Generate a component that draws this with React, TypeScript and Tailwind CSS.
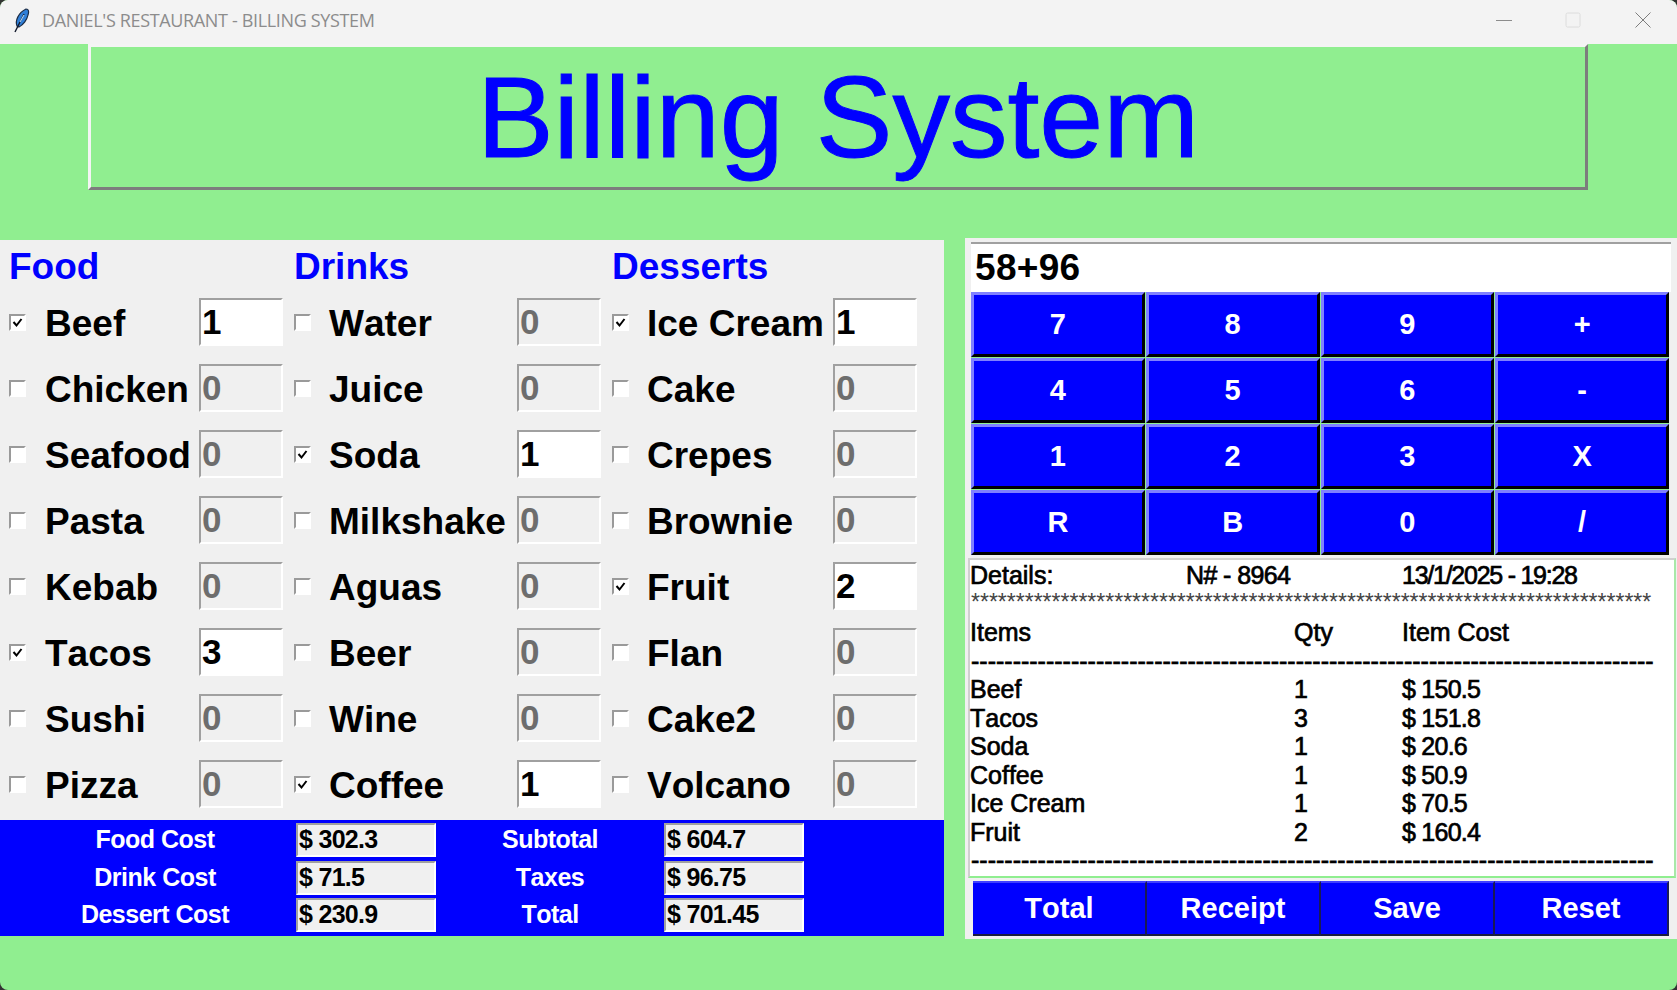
import React from 'react';

type Item = { name: string; qty: string };

const columns: { title: string; width: string; labelWidth: string; items: Item[] }[] = [
  {
    title: 'Food',
    width: 'w-[284px] pl-[9px]',
    labelWidth: 'w-[173px] pl-[19px]',
    items: [
      { name: 'Beef', qty: '1' },
      { name: 'Chicken', qty: '0' },
      { name: 'Seafood', qty: '0' },
      { name: 'Pasta', qty: '0' },
      { name: 'Kebab', qty: '0' },
      { name: 'Tacos', qty: '3' },
      { name: 'Sushi', qty: '0' },
      { name: 'Pizza', qty: '0' },
    ],
  },
  {
    title: 'Drinks',
    width: 'w-[318px] pl-[10px]',
    labelWidth: 'w-[206px] pl-[18px]',
    items: [
      { name: 'Water', qty: '0' },
      { name: 'Juice', qty: '0' },
      { name: 'Soda', qty: '1' },
      { name: 'Milkshake', qty: '0' },
      { name: 'Aguas', qty: '0' },
      { name: 'Beer', qty: '0' },
      { name: 'Wine', qty: '0' },
      { name: 'Coffee', qty: '1' },
    ],
  },
  {
    title: 'Desserts',
    width: 'w-[330px] pl-[10px]',
    labelWidth: 'w-[204px] pl-[18px]',
    items: [
      { name: 'Ice Cream', qty: '1' },
      { name: 'Cake', qty: '0' },
      { name: 'Crepes', qty: '0' },
      { name: 'Brownie', qty: '0' },
      { name: 'Fruit', qty: '2' },
      { name: 'Flan', qty: '0' },
      { name: 'Cake2', qty: '0' },
      { name: 'Volcano', qty: '0' },
    ],
  },
];

const costs = [
  ['Food Cost', '$ 302.3', 'Subtotal', '$ 604.7'],
  ['Drink Cost', '$ 71.5', 'Taxes', '$ 96.75'],
  ['Dessert Cost', '$ 230.9', 'Total', '$ 701.45'],
];

const keys = ['7', '8', '9', '+', '4', '5', '6', '-', '1', '2', '3', 'X', 'R', 'B', '0', '/'];

const receiptItems = [
  ['Beef', '1', '$ 150.5'],
  ['Tacos', '3', '$ 151.8'],
  ['Soda', '1', '$ 20.6'],
  ['Coffee', '1', '$ 50.9'],
  ['Ice Cream', '1', '$ 70.5'],
  ['Fruit', '2', '$ 160.4'],
];

function Feather() {
  return (
    <svg width="20" height="26" viewBox="0 0 20 26">
      <path d="M5 19C3 14 6 6 14 2c3 0 3 3 2 6-1 5-5 10-9 12z" fill="#2f7fd8" stroke="#1b2b44" strokeWidth="1.2" />
      <path d="M3 25L12 7" stroke="#10182a" strokeWidth="1.4" fill="none" />
      <path d="M8 15l4-7" stroke="#a9d2f5" strokeWidth="1.2" fill="none" />
    </svg>
  );
}

function CheckBox({ checked }: { checked: boolean }) {
  return (
    <div className="w-[17px] h-[17px] shrink-0 bg-white border-2 border-t-[#9a9a9a] border-l-[#9a9a9a] border-r-white border-b-white flex items-center justify-center">
      {checked && (
        <svg width="11" height="11" viewBox="0 0 11 11">
          <path d="M1.5 5l3 3.5L9.5 2" stroke="#000" strokeWidth="2" fill="none" />
        </svg>
      )}
    </div>
  );
}

function Row({ item, labelWidth }: { item: Item; labelWidth: string }) {
  const active = item.qty !== '0';
  return (
    <div className="flex items-center h-[48px]">
      <CheckBox checked={active} />
      <div className={`${labelWidth} pt-[2px] text-[37px] font-bold text-black whitespace-nowrap leading-none`}>{item.name}</div>
      <div
        className={`w-[84px] h-[48px] shrink-0 border-2 border-t-[#a0a0a0] border-l-[#a0a0a0] border-r-white border-b-white flex items-center pl-[1px] text-[35px] font-bold ${active ? 'bg-white text-black' : 'bg-[#f0f0f0] text-[#6d6d6d]'}`}
      >
        {item.qty}
      </div>
    </div>
  );
}

export default function App() {
  return (
    <div className="w-[1677px] h-[990px] bg-[#333333] overflow-hidden font-['Liberation_Sans',Arial,sans-serif] [font-kerning:none]">
      <div className="h-full bg-[#90ee90] rounded-[8px] overflow-hidden">
        {/* Title bar */}
        <div className="h-[44px] bg-[#f3f3f3] flex items-center pb-[4px]">
          <div className="pl-[12px] w-[42px]">
            <Feather />
          </div>
          <span className="text-[#8c8c8c] text-[18px] font-['Open_Sans',sans-serif] tracking-[-0.35px]">DANIEL'S RESTAURANT - BILLING SYSTEM</span>
          <div className="ml-auto flex items-center">
            <div className="w-[69px] flex justify-center pr-[2px]">
              <svg width="16" height="16" viewBox="0 0 16 16">
                <path d="M0 8.5h16" stroke="#8c8c8c" strokeWidth="1" />
              </svg>
            </div>
            <div className="w-[69px] flex justify-center pr-[2px]">
              <svg width="16" height="16" viewBox="0 0 16 16">
                <rect x="1" y="1" width="14" height="14" rx="1.5" fill="none" stroke="#dcdcdc" strokeWidth="1" />
              </svg>
            </div>
            <div className="w-[69px] flex justify-center">
              <svg width="16" height="16" viewBox="0 0 16 16">
                <path d="M0.5 0.5l15 15M15.5 0.5l-15 15" stroke="#7d7d7d" strokeWidth="1" />
              </svg>
            </div>
          </div>
        </div>

        {/* Heading */}
        <div className="pl-[88px]">
          <div className="w-[1500px] h-[146px] border-[3px] border-t-[#f4f4f4] border-l-[#f4f4f4] border-r-[#7d7d7d] border-b-[#7d7d7d] flex items-center justify-center">
            <span className="text-[115px] leading-none text-[#0000ff] [-webkit-text-stroke:1px_#0000ff]">Billing System</span>
          </div>
        </div>

        <div className="flex items-start pt-[48px]">
          {/* Left panel */}
          <div className="w-[944px] mt-[2px] bg-[#f0f0f0]">
            <div className="flex">
              {columns.map((col) => (
                <div key={col.title} className={col.width}>
                  <div className="h-[58px] pt-[7px] text-[37px] leading-[40px] font-bold text-[#0000ff]">{col.title}</div>
                  <div className="flex flex-col gap-[18px]">
                    {col.items.map((item) => (
                      <Row key={item.name} item={item} labelWidth={col.labelWidth} />
                    ))}
                  </div>
                </div>
              ))}
            </div>
            <div className="mt-[12px] h-[116px] bg-[#0000ff] pt-[3px] flex flex-col gap-[3.5px]">
              {costs.map((row) => (
                <div key={row[0]} className="flex items-center h-[34px] text-[25px] font-bold tracking-[-0.5px]">
                  <div className="w-[296px] pl-[14px] text-center text-white">{row[0]}</div>
                  <div className="w-[140px] h-[34px] bg-[#f0f0f0] border-2 border-t-[#a0a0a0] border-l-[#a0a0a0] border-r-white border-b-white flex items-center pl-[1px] text-black tracking-[-0.7px]">{row[1]}</div>
                  <div className="w-[228px] text-center text-white">{row[2]}</div>
                  <div className="w-[140px] h-[34px] bg-[#f0f0f0] border-2 border-t-[#a0a0a0] border-l-[#a0a0a0] border-r-white border-b-white flex items-center pl-[1px] text-black tracking-[-0.7px]">{row[3]}</div>
                </div>
              ))}
            </div>
          </div>

          {/* Right panel */}
          <div className="w-[712px] ml-[21px] h-[701px] bg-[#f0f0f0] pt-[4px]">
            <div className="ml-[6px] w-[700px] h-[50px] bg-white border-t-2 border-[#a0a0a0] pl-[4px] flex items-center text-[37px] font-bold text-black tracking-[0.3px]">58+96</div>
            <div className="ml-[6px] w-[698px] bg-[#90ee90] grid grid-cols-4 gap-[1px] h-[263px]">
              {keys.map((k) => (
                <div
                  key={k}
                  className="bg-[#0000ff] border-[3px] border-t-[#8080ff] border-l-[#8080ff] border-r-black border-b-black flex items-center justify-center text-white font-bold text-[29px]"
                >
                  {k}
                </div>
              ))}
            </div>
            <div className="ml-[3px] mt-[3px] w-[708px] h-[320px] bg-white border-2 border-t-[#d0d0d0] border-l-[#d0d0d0] border-r-[#a8e8a8] border-b-[#90ee90] pt-[1px] text-[25px] leading-[28.5px] text-black [-webkit-text-stroke:0.7px_black]">
              <div className="grid grid-cols-[324px_108px_1fr]">
                <span>Details:</span>
                <span className="-ml-[108px] tracking-[-0.6px]">N# - 8964</span>
                <span className="tracking-[-1.25px]">13/1/2025 - 19:28</span>
              </div>
              <div className="h-[28.5px] text-[23px] leading-[25px] text-[#444444] [-webkit-text-stroke:0px] whitespace-nowrap pl-[1px]">{'*'.repeat(76)}</div>
              <div className="grid grid-cols-[324px_108px_1fr]">
                <span>Items</span>
                <span>Qty</span>
                <span>Item Cost</span>
              </div>
              <div className="pl-[1px] whitespace-nowrap">{'-'.repeat(82)}</div>
              {receiptItems.map((r) => (
                <div key={r[0]} className="grid grid-cols-[324px_108px_1fr]">
                  <span>{r[0]}</span>
                  <span>{r[1]}</span>
                  <span className="tracking-[-0.75px]">{r[2]}</span>
                </div>
              ))}
              <div className="pl-[1px] whitespace-nowrap">{'-'.repeat(82)}</div>
            </div>
            <div className="ml-[8px] mt-[3px] w-[696px] grid grid-cols-4 h-[55px]">
              {['Total', 'Receipt', 'Save', 'Reset'].map((b) => (
                <div
                  key={b}
                  className="bg-[#0000ff] border-t-2 border-r-2 border-b-2 border-t-[#4040ff] border-r-[#1a1a55] border-b-[#1a1a40] flex items-center justify-center pt-[1px] text-white font-bold text-[29px]"
                >
                  {b}
                </div>
              ))}
            </div>
          </div>
        </div>
      </div>
    </div>
  );
}
